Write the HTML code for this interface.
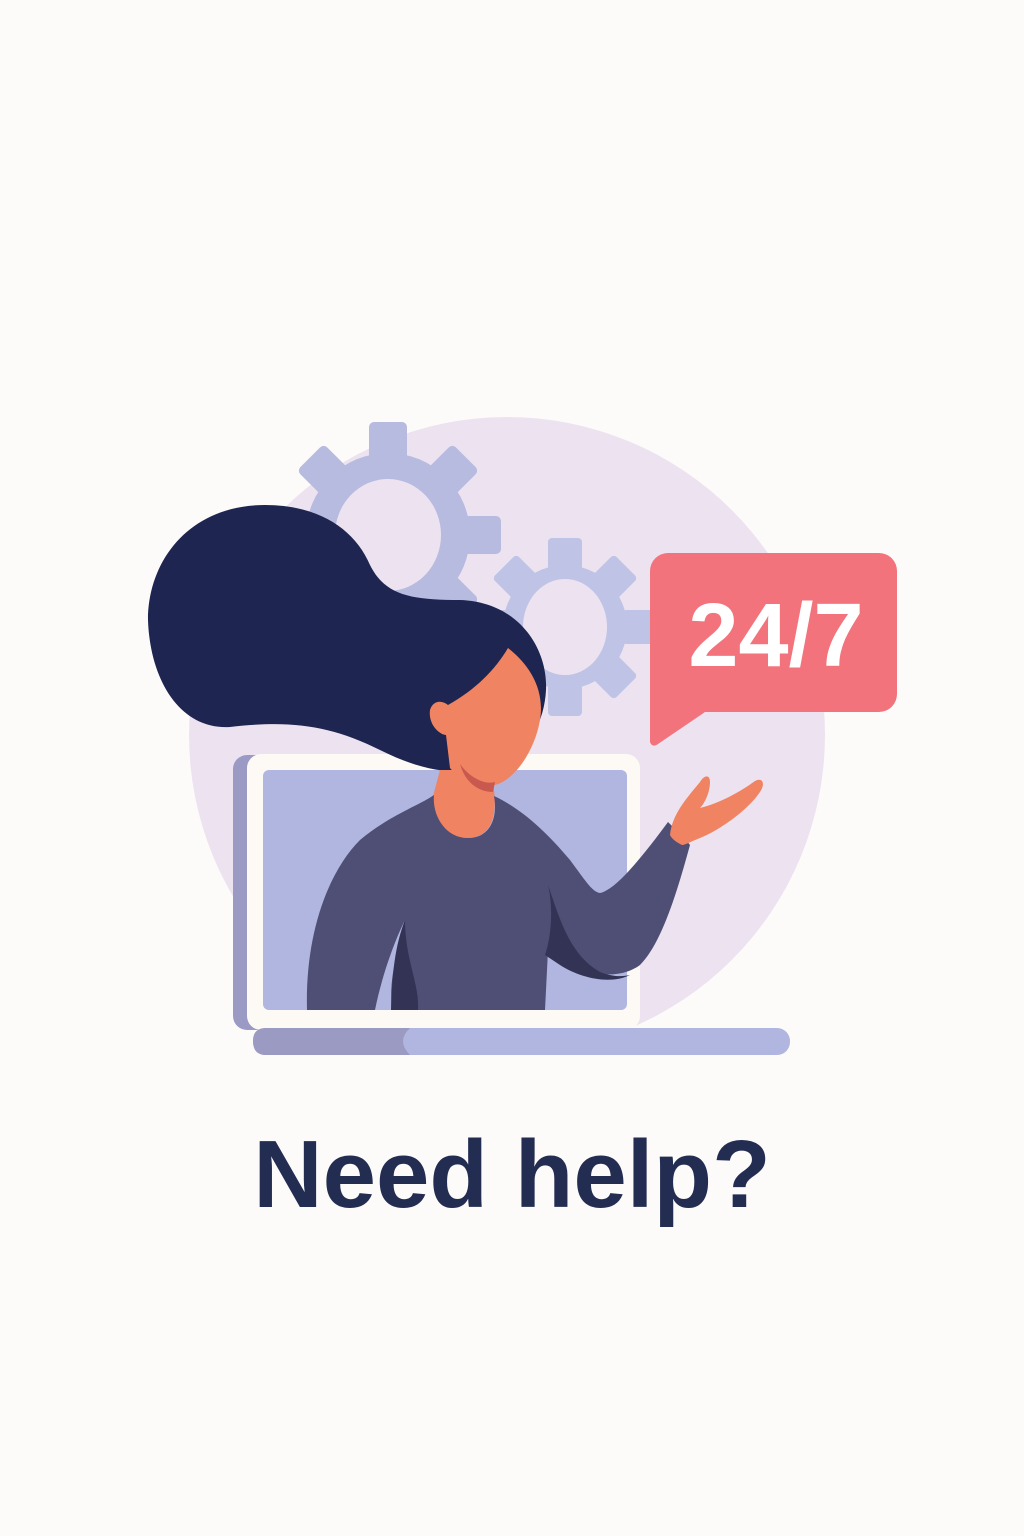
<!DOCTYPE html>
<html><head><meta charset="utf-8"><style>
html,body{margin:0;padding:0;background:#fdfbf9;}
body{width:1024px;height:1536px;position:relative;overflow:hidden;}
svg{position:absolute;left:0;top:0;}
.t{position:absolute;left:0;width:1024px;top:1120px;text-align:center;font-family:"Liberation Sans",sans-serif;font-weight:bold;font-size:96px;color:#232d52;letter-spacing:0px;}
</style></head><body>
<svg width="1024" height="1536" viewBox="0 0 1024 1536">
<circle cx="507" cy="735" r="318" fill="#ede3f0"/>
<g fill="#b8bbe0" transform="translate(388,535)">
<circle r="82"/>
<rect x="-19" y="-113" width="38" height="40" rx="5"/>
<rect x="-19" y="73" width="38" height="40" rx="5"/>
<rect x="73" y="-19" width="40" height="38" rx="5"/>
<rect x="-113" y="-19" width="40" height="38" rx="5"/>
<g transform="rotate(45)"><rect x="-19" y="-110" width="38" height="40" rx="5"/><rect x="-19" y="70" width="38" height="40" rx="5"/><rect x="70" y="-19" width="40" height="38" rx="5"/><rect x="-110" y="-19" width="40" height="38" rx="5"/></g>
</g>
<ellipse cx="388" cy="535" rx="53" ry="56" fill="#ede3f0"/>
<g fill="#bfc4e6" transform="translate(565,627)">
<circle r="62"/>
<rect x="-17" y="-89" width="34" height="32" rx="4"/>
<rect x="-17" y="57" width="34" height="32" rx="4"/>
<rect x="57" y="-17" width="32" height="34" rx="4"/>
<rect x="-89" y="-17" width="32" height="34" rx="4"/>
<g transform="rotate(45)"><rect x="-17" y="-86" width="34" height="30" rx="4"/><rect x="-17" y="56" width="34" height="30" rx="4"/><rect x="56" y="-17" width="30" height="34" rx="4"/><rect x="-86" y="-17" width="30" height="34" rx="4"/></g>
</g>
<ellipse cx="565" cy="627" rx="42" ry="48" fill="#ede3f0"/>
<rect x="650" y="553" width="247" height="159" rx="18" fill="#f2737c"/>
<path d="M650 690 L650 742 Q652 748 658 744 L708 710 Z" fill="#f2737c"/>
<text x="776" y="666" text-anchor="middle" font-family="Liberation Sans,sans-serif" font-weight="bold" font-size="90" fill="#fff">24/7</text>
<rect x="233" y="755" width="380" height="275" rx="14" fill="#9a9ac4"/>
<rect x="247" y="754" width="393" height="276" rx="14" fill="#fdf9f5"/>
<rect x="263" y="770" width="364" height="240" rx="6" fill="#b0b6df"/>
<rect x="253" y="1028" width="537" height="27" rx="13" fill="#b0b6df"/>
<path d="M266 1028 H410 Q396 1041 410 1055 H266 Q253 1055 253 1041 Q253 1028 266 1028Z" fill="#9a9ac2"/>
<path d="M265 505 C320 505 355 530 370 565 C385 595 410 600 460 600 C520 602 548 650 546 690 C544 730 520 760 490 770 C450 775 420 770 380 750 C330 725 290 720 230 727 C180 730 150 680 148 620 C148 560 190 505 265 505Z" fill="#1e2550"/>
<path d="M440 770 L432 800 C430 820 445 840 470 838 C492 836 497 815 494 790 L492 770Z" fill="#f08462"/>
<path d="M508 648 C530 665 545 690 540 720 C535 750 515 780 495 785 C475 788 458 778 450 768 L446 735 C440 735 428 725 430 710 C433 700 442 700 448 705 C475 690 495 670 508 648Z" fill="#f08462"/>
<path d="M460 764 C470 778 485 785 495 782 L493 792 C478 792 465 782 460 764Z" fill="#c9594f"/>
<path d="M307 1010 C305 930 330 870 360 840 C390 815 420 805 434 795 C432 815 445 838 468 838 C490 838 498 818 494 796 C520 808 545 830 570 860 C585 880 592 892 600 893 C615 890 640 860 668 822 C676 830 685 838 690 845 C675 900 660 945 640 965 C620 980 590 975 570 965 C555 955 550 950 548 950 L545 1010Z" fill="#4f4e75"/>
<path d="M548 885 C560 920 570 955 600 972 C615 978 625 976 630 975 C610 985 580 978 560 965 L545 955 C552 935 553 905 548 885Z" fill="#323355"/>
<path d="M405 920 C395 940 382 975 375 1010 L392 1010 C388 975 400 945 405 920Z" fill="#b0b6df"/>
<path d="M405 920 C405 960 420 985 418 1010 L391 1010 C392 975 395 945 405 920Z" fill="#323355"/>
<path d="M670 835 C672 815 685 800 700 782 C704 775 710 774 710 782 C710 792 705 803 700 808 C720 803 740 792 755 781 C762 777 766 783 760 792 C748 810 720 830 700 838 C690 842 685 845 682 845 C676 842 672 839 670 835Z" fill="#f08462"/>
</svg>
<div class="t">Need help?</div>
</body></html>
